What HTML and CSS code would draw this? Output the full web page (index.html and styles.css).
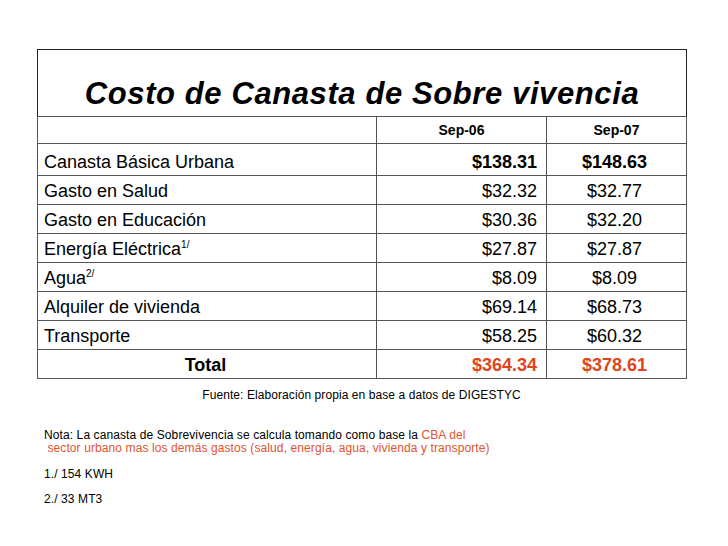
FILE: index.html
```html
<!DOCTYPE html>
<html lang="es">
<head>
<meta charset="utf-8">
<title>Costo de Canasta de Sobre vivencia</title>
<link rel="stylesheet" href="styles.css">
</head>
<body>
<div class="page">
  <table class="canasta">
    <colgroup>
      <col class="c-label">
      <col class="c-06">
      <col class="c-07">
    </colgroup>
    <tr class="title-row">
      <td colspan="3" class="title">Costo de Canasta de Sobre vivencia</td>
    </tr>
    <tr class="head-row">
      <td></td>
      <td class="head">Sep-06</td>
      <td class="head">Sep-07</td>
    </tr>
    <tr class="first-row bold-row">
      <td class="label">Canasta Básica Urbana</td>
      <td class="num">$138.31</td>
      <td class="num2">$148.63</td>
    </tr>
    <tr>
      <td class="label">Gasto en Salud</td>
      <td class="num">$32.32</td>
      <td class="num2">$32.77</td>
    </tr>
    <tr>
      <td class="label">Gasto en Educación</td>
      <td class="num">$30.36</td>
      <td class="num2">$32.20</td>
    </tr>
    <tr>
      <td class="label">Energía Eléctrica<sup>1/</sup></td>
      <td class="num">$27.87</td>
      <td class="num2">$27.87</td>
    </tr>
    <tr>
      <td class="label">Agua<sup>2/</sup></td>
      <td class="num">$8.09</td>
      <td class="num2">$8.09</td>
    </tr>
    <tr>
      <td class="label">Alquiler de vivienda</td>
      <td class="num">$69.14</td>
      <td class="num2">$68.73</td>
    </tr>
    <tr>
      <td class="label">Transporte</td>
      <td class="num">$58.25</td>
      <td class="num2">$60.32</td>
    </tr>
    <tr class="total-row">
      <td class="total-label">Total</td>
      <td class="num red">$364.34</td>
      <td class="num2 red">$378.61</td>
    </tr>
  </table>
  <p class="source">Fuente: Elaboración propia en base a datos de DIGESTYC</p>
  <p class="note">Nota: La canasta de Sobrevivencia se calcula tomando como base la <span class="accent">CBA del<br>&nbsp;sector urbano mas los demás gastos (salud, energía, agua, vivienda y transporte)</span></p>
  <p class="note">1./ 154 KWH</p>
  <p class="note">2./ 33 MT3</p>
</div>
</body>
</html>
```

FILE: styles.css
```css
html, body {
  margin: 0;
  padding: 0;
  background: #ffffff;
}

body {
  font-family: "Liberation Sans", Arial, sans-serif;
  color: #000000;
}

.page {
  padding: 49px 0 0 37px;
  width: 649px;
}

.canasta {
  border-collapse: collapse;
  table-layout: fixed;
  width: 649px;
  border: 1px solid #222222;
}

.c-label { width: 339px; }
.c-06 { width: 170px; }
.c-07 { width: 140px; }

.canasta td {
  border: 1px solid #555555;
  font-size: 18px;
  line-height: 20px;
  padding: 5px 9px 3px 6px;
  vertical-align: bottom;
  white-space: nowrap;
}

.title-row td.title {
  border: 1px solid #222222;
  border-bottom-color: #555555;
  font-size: 31px;
  line-height: 35px;
  font-weight: bold;
  font-style: italic;
  letter-spacing: 0.6px;
  text-align: center;
  padding: 26px 0 5px 0;
}

.head-row td {
  font-size: 14px;
  line-height: 16px;
  padding: 5px 0 5px 0;
}

.head-row td.head {
  font-weight: bold;
  text-align: center;
}

.first-row td {
  padding-top: 8px;
}

.bold-row td.num,
.bold-row td.num2 {
  font-weight: bold;
}

.label {
  text-align: left;
}

.num {
  text-align: right;
}

.canasta td.num2 {
  text-align: center;
  padding-left: 0;
  padding-right: 4px;
}

.total-label {
  text-align: center;
  font-weight: bold;
}

.canasta td.red {
  color: #e0461e;
  font-weight: bold;
}

.canasta sup {
  font-size: 10px;
  line-height: 0;
  vertical-align: 7px;
}

.source {
  margin: 10px 0 0 0;
  width: 649px;
  text-align: center;
  font-size: 12px;
  line-height: 13.5px;
  letter-spacing: 0.08px;
}

.note {
  margin: 12px 0 0 7px;
  font-size: 12px;
  line-height: 13.5px;
  letter-spacing: 0.1px;
}

.source + .note {
  margin-top: 26px;
}

.accent {
  color: #e0542f;
}
```
